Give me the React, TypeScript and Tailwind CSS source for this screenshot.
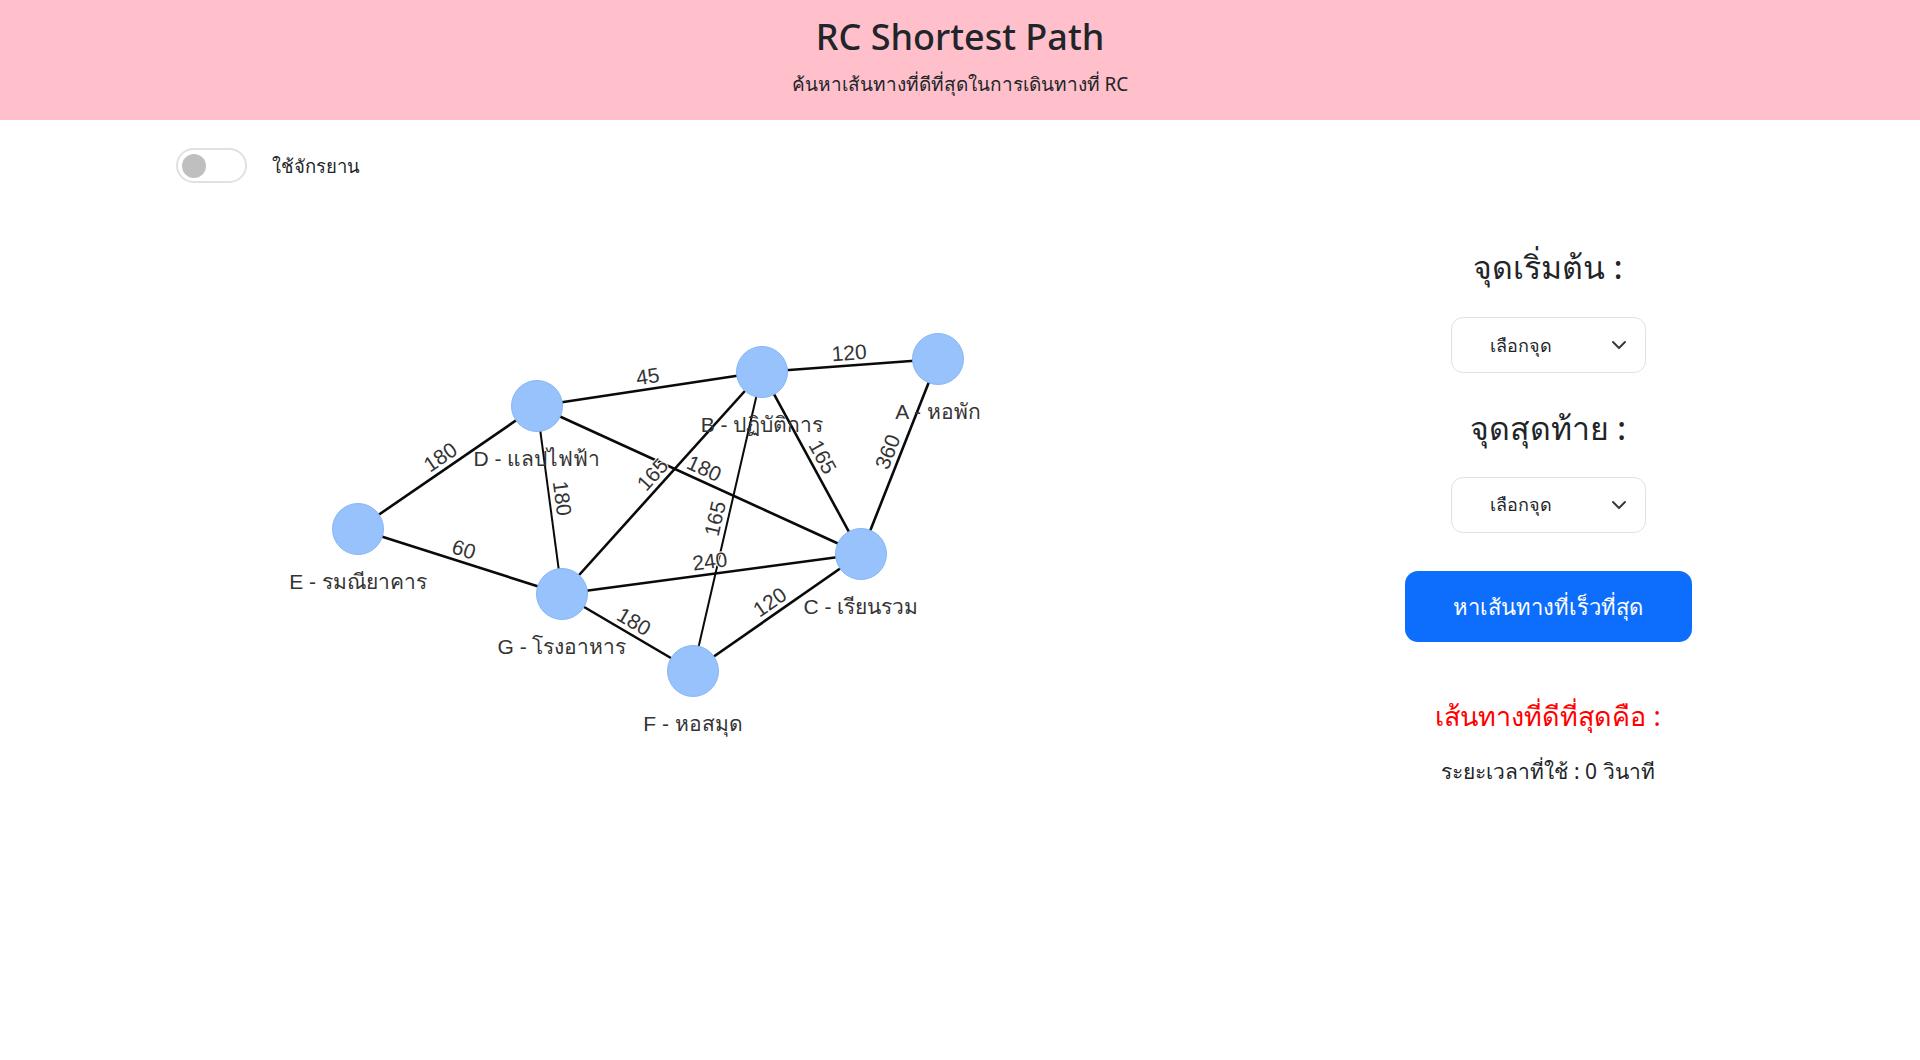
import React from "react"

type Node = { id: string; x: number; y: number; label: string }

const nodes: Node[] = [
  { id: "A", x: 938, y: 359, label: "A - หอพัก" },
  { id: "B", x: 762, y: 372, label: "B - ปฏิบัติการ" },
  { id: "C", x: 861, y: 554, label: "C - เรียนรวม" },
  { id: "D", x: 537, y: 406, label: "D - แลปไฟฟ้า" },
  { id: "E", x: 358, y: 529, label: "E - รมณียาคาร" },
  { id: "F", x: 693, y: 671, label: "F - หอสมุด" },
  { id: "G", x: 562, y: 594, label: "G - โรงอาหาร" },
]

// [from, to, weight, stroke width]
const edges: [string, string, number, number][] = [
  ["D", "B", 45, 2.6],
  ["B", "A", 120, 2.6],
  ["A", "C", 360, 2.6],
  ["B", "C", 165, 2.6],
  ["B", "G", 165, 2.6],
  ["B", "F", 165, 2],
  ["D", "C", 180, 2.6],
  ["D", "E", 180, 2.6],
  ["D", "G", 180, 2],
  ["E", "G", 60, 2.6],
  ["G", "C", 240, 2.6],
  ["G", "F", 180, 2.6],
  ["F", "C", 120, 2.6],
]

const byId = Object.fromEntries(nodes.map((n) => [n.id, n]))

const graphFont = '"Liberation Sans", Arial, sans-serif'

function Graph() {
  return (
    <svg
      className="ml-[280px] mt-[120px] block"
      width={720}
      height={430}
      viewBox="280 320 720 430"
    >
      {edges.map(([a, b, , sw]) => {
        const p = byId[a]
        const q = byId[b]
        return (
          <line key={a + b} x1={p.x} y1={p.y} x2={q.x} y2={q.y} stroke="#0a0a0a" strokeWidth={sw} />
        )
      })}
      {edges.map(([a, b, w]) => {
        const p = byId[a]
        const q = byId[b]
        // keep the weight readable left-to-right, sitting just above the edge
        let ang = (Math.atan2(q.y - p.y, q.x - p.x) * 180) / Math.PI
        if (ang > 90) ang -= 180
        if (ang < -90) ang += 180
        const r = (ang * Math.PI) / 180
        const mx = (p.x + q.x) / 2 + 13 * Math.sin(r)
        const my = (p.y + q.y) / 2 - 13 * Math.cos(r)
        return (
          <g key={"l" + a + b} transform={`translate(${mx} ${my}) rotate(${ang})`}>
            <text
              textAnchor="middle"
              dominantBaseline="central"
              fontSize={21}
              fill="#343434"
              stroke="#fff"
              strokeWidth={2}
              paintOrder="stroke"
              style={{ fontFamily: graphFont }}
            >
              {w}
            </text>
          </g>
        )
      })}
      {nodes.map((n) => (
        <circle key={n.id} cx={n.x} cy={n.y} r={25.5} fill="#97c2fc" stroke="#86b6f8" strokeWidth={1} />
      ))}
      {nodes.map((n) => (
        <text
          key={"t" + n.id}
          x={n.x}
          y={n.y + 52}
          textAnchor="middle"
          dominantBaseline="central"
          fontSize={21}
          fill="#343434"
          style={{ fontFamily: graphFont }}
        >
          {n.label}
        </text>
      ))}
    </svg>
  )
}

function Chevron() {
  return (
    <svg width="16" height="16" viewBox="0 0 16 16" fill="none" className="shrink-0">
      <path d="M2 5l6 6 6-6" stroke="#343a40" strokeWidth="2" strokeLinecap="round" strokeLinejoin="round" />
    </svg>
  )
}

function Select() {
  return (
    <div className="flex h-[56px] w-[195px] items-center justify-between rounded-[12px] border border-[#dee2e6] bg-white pl-[38px] pr-[18px] text-[18px] text-[#212529]">
      <span>เลือกจุด</span>
      <Chevron />
    </div>
  )
}

export default function App() {
  return (
    <div
      className="min-h-screen bg-white text-[#212529]"
      style={{ fontFamily: '"Noto Sans", "Open Sans", sans-serif' }}
    >
      <header className="flex h-[120px] flex-col items-center bg-[#ffc0cb] pt-[15px]">
        <h1 className="text-[36px] font-medium leading-[1.2]">RC Shortest Path</h1>
        <p className="mt-[15px] text-[19px] leading-[1.2]">ค้นหาเส้นทางที่ดีที่สุดในการเดินทางที่ RC</p>
      </header>

      <main className="pt-[28px]">
        <div className="flex h-[35px] items-center gap-[25px] pl-[176px]">
          <div className="flex h-[35px] w-[71px] items-center rounded-full border-2 border-[#dee2e6] bg-white pl-[4px]">
            <div className="h-[24px] w-[24px] rounded-full bg-[#bfbfbf]" />
          </div>
          <span className="text-[18.5px]">ใช้จักรยาน</span>
        </div>

        <div className="mt-[17px] flex">
          <div className="w-[1348px]">
            <Graph />
          </div>
          <div className="flex w-[400px] flex-col items-center pt-[48px]">
            <h2 className="text-[32px] font-medium leading-[1.2]">จุดเริ่มต้น :</h2>
            <div className="mt-[31px]">
              <Select />
            </div>
            <h2 className="mt-[36px] text-[32px] font-medium leading-[1.2]">จุดสุดท้าย :</h2>
            <div className="mt-[29px]">
              <Select />
            </div>
            <button className="mt-[38px] flex h-[71px] w-[287px] items-center justify-center rounded-[13px] bg-[#0d6efd] text-[22px] font-medium text-white">
              หาเส้นทางที่เร็วที่สุด
            </button>
            <p className="mt-[58px] text-[27px] leading-[1.2] text-[#ff0000]">เส้นทางที่ดีที่สุดคือ :</p>
            <p className="mt-[27px] text-[21px] leading-[1.2]">ระยะเวลาที่ใช้ : 0 วินาที</p>
          </div>
        </div>
      </main>
    </div>
  )
}
